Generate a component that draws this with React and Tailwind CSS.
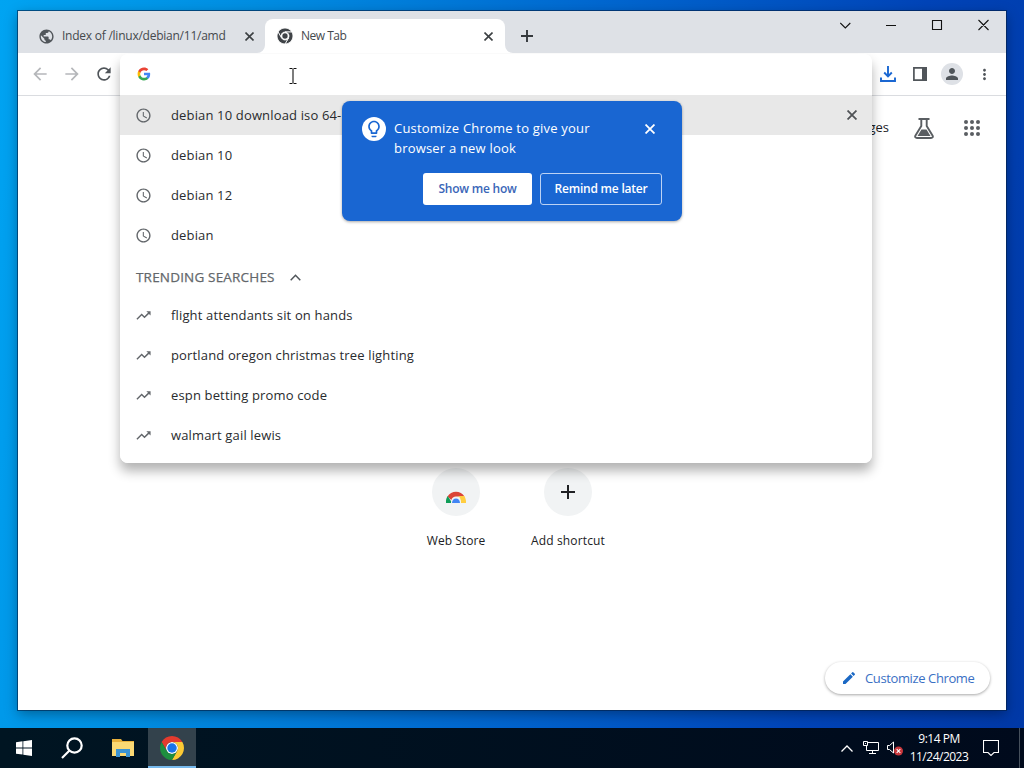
import React from 'react';
import {
  MdAccessTime,
  MdArrowBack,
  MdArrowForward,
  MdClose,
  MdEdit,
  MdLightbulbOutline,
  MdMoreVert,
  MdPerson,
  MdPublic,
  MdRefresh,
  MdTrendingUp
} from 'react-icons/md';

const recentSearches = [
  { text: 'debian 10 download iso 64-bit', active: true },
  { text: 'debian 10' },
  { text: 'debian 12' },
  { text: 'debian' }
];

const trendingSearches = [
  'flight attendants sit on hands',
  'portland oregon christmas tree lighting',
  'espn betting promo code',
  'walmart gail lewis'
];

const ChromeLogo = ({ className }) => (
  <svg className={className} viewBox="0 0 48 48">
    <circle cx="24" cy="24" r="12" fill="#fff" />
    <path fill="#e33b2e" d="M24,12H44.78a24,24,0,0,0-41.56,0L13.61,30A11.99,11.99,0,0,1,24,12Z" />
    <path fill="#fcc934" d="M34.39,30,24,48A24,24,0,0,0,44.78,12H24A11.99,11.99,0,0,1,34.39,30Z" />
    <path fill="#1e8e3e" d="M13.61,30,3.22,12A24,24,0,0,0,24,48L34.39,30a11.99,11.99,0,0,1-20.78,0Z" />
    <circle cx="24" cy="24" r="9.5" fill="#1a73e8" />
  </svg>
);

const ChromeMono = ({ className }) => (
  <svg className={className} viewBox="0 0 48 48" fill="#3f4347">
    <g stroke="#fff" strokeWidth="2.5">
      <path d="M24,12H44.78a24,24,0,0,0-41.56,0L13.61,30A11.99,11.99,0,0,1,24,12Z" />
      <path d="M34.39,30,24,48A24,24,0,0,0,44.78,12H24A11.99,11.99,0,0,1,34.39,30Z" />
      <path d="M13.61,30,3.22,12A24,24,0,0,0,24,48L34.39,30a11.99,11.99,0,0,1-20.78,0Z" />
    </g>
    <circle cx="24" cy="24" r="8" />
  </svg>
);

const GoogleG = ({ className }) => (
  <svg className={className} viewBox="0 0 24 24">
    <path fill="#4285f4" d="M22.56 12.25c0-.78-.07-1.53-.2-2.25H12v4.26h5.92c-.26 1.37-1.04 2.53-2.21 3.31v2.77h3.57c2.08-1.92 3.28-4.74 3.28-8.09z" />
    <path fill="#34a853" d="M12 23c2.97 0 5.46-.98 7.28-2.66l-3.57-2.77c-.98.66-2.23 1.06-3.71 1.06-2.86 0-5.29-1.93-6.16-4.53H2.18v2.84C3.99 20.53 7.7 23 12 23z" />
    <path fill="#fbbc05" d="M5.84 14.09c-.22-.66-.35-1.36-.35-2.09s.13-1.43.35-2.09V7.07H2.18C1.43 8.55 1 10.22 1 12s.43 3.45 1.18 4.93l3.66-2.84z" />
    <path fill="#ea4335" d="M12 5.38c1.62 0 3.06.56 4.21 1.64l3.15-3.15C17.45 2.09 14.97 1 12 1 7.7 1 3.99 3.47 2.18 7.07l3.66 2.84c.87-2.6 3.3-4.53 6.16-4.53z" />
  </svg>
);

const CloseIcon = ({ className }) => (
  <svg className={className} viewBox="0 0 9 9" fill="none" stroke="currentColor" strokeWidth="1.6">
    <path d="M.5.5l8 8M8.5.5l-8 8" />
  </svg>
);

const TabStrip = () => (
  <div className="flex h-[42px] shrink-0 items-end bg-[#dee1e6] text-[12px] text-[#45494d]">
    <div className="flex h-[34px] w-[247px] items-center pl-[20px] pr-[11px]">
      <MdPublic className="h-[17px] w-[17px] shrink-0 text-[#50555a]" />
      <span className="ml-[7px] whitespace-nowrap tracking-[-0.24px]">Index of /linux/debian/11/amd</span>
      <CloseIcon className="ml-auto h-[9px] w-[9px] shrink-0 text-[#3c4043]" />
    </div>
    <div className="relative flex h-[34px] w-[240px] items-center rounded-t-lg bg-white pl-[12px] pr-[12px]">
      <svg className="absolute -left-2 bottom-0 h-2 w-2" viewBox="0 0 8 8" fill="#fff">
        <path d="M8 0v8H0a8 8 0 0 0 8-8z" />
      </svg>
      <svg className="absolute -right-2 bottom-0 h-2 w-2" viewBox="0 0 8 8" fill="#fff">
        <path d="M0 0v8h8a8 8 0 0 1-8-8z" />
      </svg>
      <ChromeMono className="h-4 w-4 shrink-0" />
      <span className="ml-2 whitespace-nowrap tracking-[-0.5px]">New Tab</span>
      <CloseIcon className="ml-auto h-[9px] w-[9px] text-[#3c4043]" />
    </div>
    <div className="flex h-[34px] items-center pl-[16px]">
      <svg className="h-3 w-3" viewBox="0 0 12 12" stroke="#34383c" strokeWidth="1.9">
        <path d="M6 0v12M0 6h12" />
      </svg>
    </div>
    <div className="ml-auto flex h-full items-start pr-[5px] pt-[8px]">
      <svg className="h-[13px] w-[161px]" viewBox="0 0 161 13" fill="none" stroke="#111" strokeWidth="1.1">
        <path d="M.3 4l5 5 5-5M46 6.500h10M92.500 1.500h9v9h-9zM138.500 1l10 10M148.500 1l-10 10" />
      </svg>
    </div>
  </div>
);

const Toolbar = () => (
  <div className="flex h-[43px] shrink-0 items-center border-b border-[#dadce0] bg-white pl-[12px]">
    <MdArrowBack className="h-5 w-5 text-[#b5b7ba]" />
    <MdArrowForward className="ml-3 h-5 w-5 text-[#b5b7ba]" />
    <MdRefresh className="ml-3 h-5 w-5 text-[#50555a]" />
    <div className="ml-auto flex items-center pr-[13px]">
      <svg className="h-4 w-4" viewBox="0 0 16 16" fill="none" stroke="#1a67d2" strokeWidth="1.9">
        <path d="M8 0v10M4.200 6.500l3.800 3.800 3.800-3.800M1 11.500V15h14v-3.500" />
      </svg>
      <svg className="ml-[17px] h-[14px] w-[14px]" viewBox="0 0 14 14" fill="none" stroke="#50555a" strokeWidth="1.7">
        <path d="M.9.900h12.200v12.200H.9z" />
        <path fill="#50555a" stroke="none" d="M9 0h5v14H9z" />
      </svg>
      <span className="ml-[14px] flex h-[22px] w-[22px] items-center justify-center rounded-full bg-[#dee1e6]">
        <MdPerson className="h-[18px] w-[18px] text-[#50555a]" />
      </span>
      <MdMoreVert className="ml-[13px] h-[17px] w-[17px] text-[#50555a]" />
    </div>
  </div>
);

const Suggestion = ({ icon: Icon, text, active }) => (
  <div className={`flex h-10 items-center pl-[15px] pr-[15px] ${active ? 'bg-[#e8e8e8]' : ''}`}>
    <Icon className="h-[17px] w-[17px] shrink-0 text-[#63676b]" />
    <span className="ml-[19px] mt-[2px] whitespace-nowrap text-[13px] tracking-[0.15px] text-[#292b2e]">{text}</span>
    {active && <CloseIcon className="ml-auto h-[10px] w-[10px] text-[#505356]" />}
  </div>
);

const OmniboxPopup = () => (
  <div className="absolute left-[102px] top-[43px] h-[409px] w-[752px] overflow-hidden rounded-lg bg-white">
    <div className="flex h-[41px] items-center pb-[2px] pl-[17px]">
      <GoogleG className="h-[14px] w-[14px]" />
      {/* text cursor */}
      <svg className="ml-[138px] mt-[4px] h-4 w-[8px]" viewBox="0 0 8 16" fill="none" stroke="#111" strokeWidth="1.1">
        <path d="M.5.500h3M4.500.500h3M.500 15.500h3M4.500 15.500h3M4 1v14" />
      </svg>
    </div>
    {recentSearches.map((item) => (
      <Suggestion key={item.text} icon={MdAccessTime} text={item.text} active={item.active} />
    ))}
    <div className="flex h-10 items-center pl-4 pt-1 text-[13.5px] font-medium text-[#63676b]">
      <span className="w-[140px] whitespace-nowrap tracking-[0.18px] [-webkit-text-stroke:0.25px_currentColor]">TRENDING SEARCHES</span>
      <svg className="ml-[14px] h-[7px] w-[11px]" viewBox="0 0 11 7" fill="none" stroke="#50555a" strokeWidth="1.5">
        <path d="M.7 6.200l4.800-4.900 4.800 4.900" />
      </svg>
    </div>
    {trendingSearches.map((text) => (
      <Suggestion key={text} icon={MdTrendingUp} text={text} />
    ))}
  </div>
);

const CustomizePromo = () => (
  <div className="absolute left-[324px] top-[90px] h-[120px] w-[340px] rounded-lg bg-[#1966d2] pl-5 pr-5 pt-4 text-white shadow-[0_1px_3px_rgba(0,0,0,0.35)]">
    <div className="flex">
      <span className="flex h-6 w-6 items-center justify-center rounded-full bg-white">
        <MdLightbulbOutline className="h-5 w-5 text-[#1966d2]" />
      </span>
      <p className="ml-2 mt-[1px] w-[220px] text-[13px] leading-5 tracking-[0.2px]">
        Customize Chrome to give your
        <br />
        browser a new look
      </p>
      <CloseIcon className="ml-auto mr-[7px] mt-[7px] h-[10px] w-[10px]" />
    </div>
    <div className="mt-[15px] flex justify-end gap-2 text-[12px] font-semibold tracking-[-0.22px]">
      <button className="h-8 w-[109px] whitespace-nowrap rounded-[3px] bg-white text-[#3a66b8]">Show me how</button>
      <button className="h-8 w-[122px] whitespace-nowrap rounded-[3px] border border-[#bcd2f4]">Remind me later</button>
    </div>
  </div>
);

const NewTabPage = () => (
  <div className="flex flex-1 flex-col bg-white text-[#202124]">
    <div className="flex h-[64px] items-center justify-end pr-[26px]">
      <span className="text-[13px]">Images</span>
      <svg className="ml-[25px] h-[21px] w-5" viewBox="0 0 20 21" fill="none" stroke="#5a5e62" strokeWidth="1.9">
        <path d="M4.500 1h11M7.300 1v7L1.500 17.500C.600 19 1.500 20 3 20h14c1.500 0 2.400-1 1.500-2.500L12.700 8V1" />
        <path fill="#5a5e62" stroke="none" d="M7.500 11.500h5l4 6.500h-13z" />
      </svg>
      <svg className="ml-[30px] h-4 w-4" viewBox="0 0 16 16" fill="#5a5e62">
        {[2, 8, 14].map((y) => [2, 8, 14].map((x) => <circle key={`${x}-${y}`} cx={x} cy={y} r="2" />))}
      </svg>
    </div>
    <div className="mt-[308px] flex justify-center text-[12px]">
      <div className="flex w-28 flex-col items-center">
        <span className="flex h-12 w-12 items-center justify-center rounded-full bg-[#f1f3f4]">
          <svg className="mt-[8px] h-[13px] w-5" viewBox="0 0 20 13">
            <path fill="#db4437" d="M1.500 6.500a10 10 0 0 1 17 0H10a5 5 0 0 0-4.700 3.500z" />
            <path fill="#0f9d58" d="M1.700 6A10 10 0 0 0 0 13h5l.2-1.500z" />
            <path fill="#ffcd40" d="M18.300 6H12c2 1 3 3.500 3 7h5a11 11 0 0 0-1.700-7z" />
            <path fill="#f1f3f4" d="M5 13a5 5.500 0 0 1 10 0z" />
            <path fill="#4285f4" d="M6 13a4 4.500 0 0 1 8 0z" />
          </svg>
        </span>
        <span className="mt-4 tracking-[0.05px]">Web Store</span>
      </div>
      <div className="flex w-28 flex-col items-center">
        <span className="flex h-12 w-12 items-center justify-center rounded-full bg-[#f1f3f4]">
          <svg className="h-[14px] w-[14px]" viewBox="0 0 14 14" stroke="#202124" strokeWidth="2">
            <path d="M7 0v14M0 7h14" />
          </svg>
        </span>
        <span className="mt-4 tracking-[0.15px]">Add shortcut</span>
      </div>
    </div>
    <div className="mb-4 mr-4 mt-auto flex h-8 w-[165px] items-center self-end rounded-full bg-white pl-4 text-[#3a70c4] shadow-[0_1px_3px_rgba(0,0,0,0.35)]">
      <MdEdit className="h-4 w-4 text-[#1b68c4]" />
      <span className="ml-2 mt-[2px] whitespace-nowrap text-[13px] tracking-[-0.38px]">Customize Chrome</span>
    </div>
  </div>
);

const Taskbar = () => (
  <div className="flex h-10 items-center bg-gradient-to-r from-[#001522] to-[#000a1c]">
    <svg className="ml-4 h-4 w-4" viewBox="0 0 16 16" fill="#fff">
      <path d="M0 2.200l6.500-.9v6.200H0zM7.300 1.200L16 0v7.500H7.300zM0 8.400h6.500v6.200L0 13.700zM7.300 8.400H16V16l-8.700-1.200z" />
    </svg>
    <svg className="ml-[29px] h-[22px] w-[22px]" viewBox="0 0 22 22" fill="none" stroke="#fff" strokeWidth="2.200">
      <circle cx="13.500" cy="8.500" r="7.200" />
      <path d="M8.500 13.500L1 21" />
    </svg>
    <svg className="ml-[29px] h-[18px] w-[22px]" viewBox="0 0 22 18">
      <path fill="#e9b13c" d="M0 0h9l1.500 2H22v4H0z" />
      <path fill="#fbd974" d="M0 3h22v14H0z" />
      <path fill="#3c93d2" d="M4 10h14v8h-4v-4H8v4H4z" />
    </svg>
    <div className="ml-[14px] flex h-10 w-12 items-center justify-center border-b-2 border-[#76b9ed] bg-[#33424c]">
      <ChromeLogo className="mt-px h-6 w-6" />
    </div>
    <div className="ml-auto flex h-full items-center text-white">
      <svg className="h-[7px] w-3" viewBox="0 0 12 7" fill="none" stroke="#fff" strokeWidth="1.300">
        <path d="M.5 6.500L6 1l5.500 5.500" />
      </svg>
      <svg className="ml-[10px] h-[14px] w-4" viewBox="0 0 16 14" fill="none" stroke="#fff">
        <path d="M5 1.500h10.500v8H3.500V5M.5.500h4v4h-4zM2 2.500h1M9.500 9.500v3M6 12.500h7" />
      </svg>
      <svg className="ml-2 h-[15px] w-4" viewBox="0 0 16 15" fill="none" stroke="#fff">
        <path d="M.5 4.500h2L6.500 1v11l-4-3.500h-2z" />
        <circle cx="11.500" cy="10" r="4.500" fill="#c8373c" stroke="none" />
        <path d="M9.700 8.200l3.600 3.600M13.300 8.200l-3.600 3.600" strokeWidth="1.100" />
      </svg>
      <div className="ml-[4px] w-[64px] text-center text-[12px] leading-[18px] tracking-[-0.5px]">
        <div className="whitespace-nowrap">9:14 PM</div>
        <div className="whitespace-nowrap">11/24/2023</div>
      </div>
      <svg className="ml-[12px] h-4 w-4" viewBox="0 0 16 16" fill="none" stroke="#fff" strokeWidth="1.100">
        <path d="M.5.500h15v12H11l-3 3-3-3H.5z" />
      </svg>
      <div className="ml-[20px] mr-1 h-full w-px bg-[#46505c]" />
    </div>
  </div>
);

const App = () => {
  return (
    <div className="flex h-[768px] w-[1024px] flex-col overflow-hidden bg-[linear-gradient(100deg,#00a4f2_0%,#008ee2_22%,#0067d0_52%,#0044b8_80%,#0038a6_100%)] font-['Open_Sans','Noto_Sans',sans-serif]">
      <div className="h-[728px] px-[18px] pb-[18px] pt-[11px]">
        <div className="relative flex h-full flex-col shadow-[0_0_0_1px_rgba(0,30,70,0.6),0_4px_12px_rgba(0,0,0,0.35)]">
          <TabStrip />
          <Toolbar />
          <NewTabPage />
          {/* shadow under the suggestions, starts below the tab strip */}
          <div className="absolute inset-x-0 top-[42px] h-[470px] overflow-hidden">
            <div className="absolute left-[102px] top-[1px] h-[409px] w-[752px] rounded-lg shadow-[0_8px_12px_rgba(0,0,0,0.3)]" />
          </div>
          <OmniboxPopup />
          <CustomizePromo />
        </div>
      </div>
      <Taskbar />
    </div>
  );
};

export default App;
